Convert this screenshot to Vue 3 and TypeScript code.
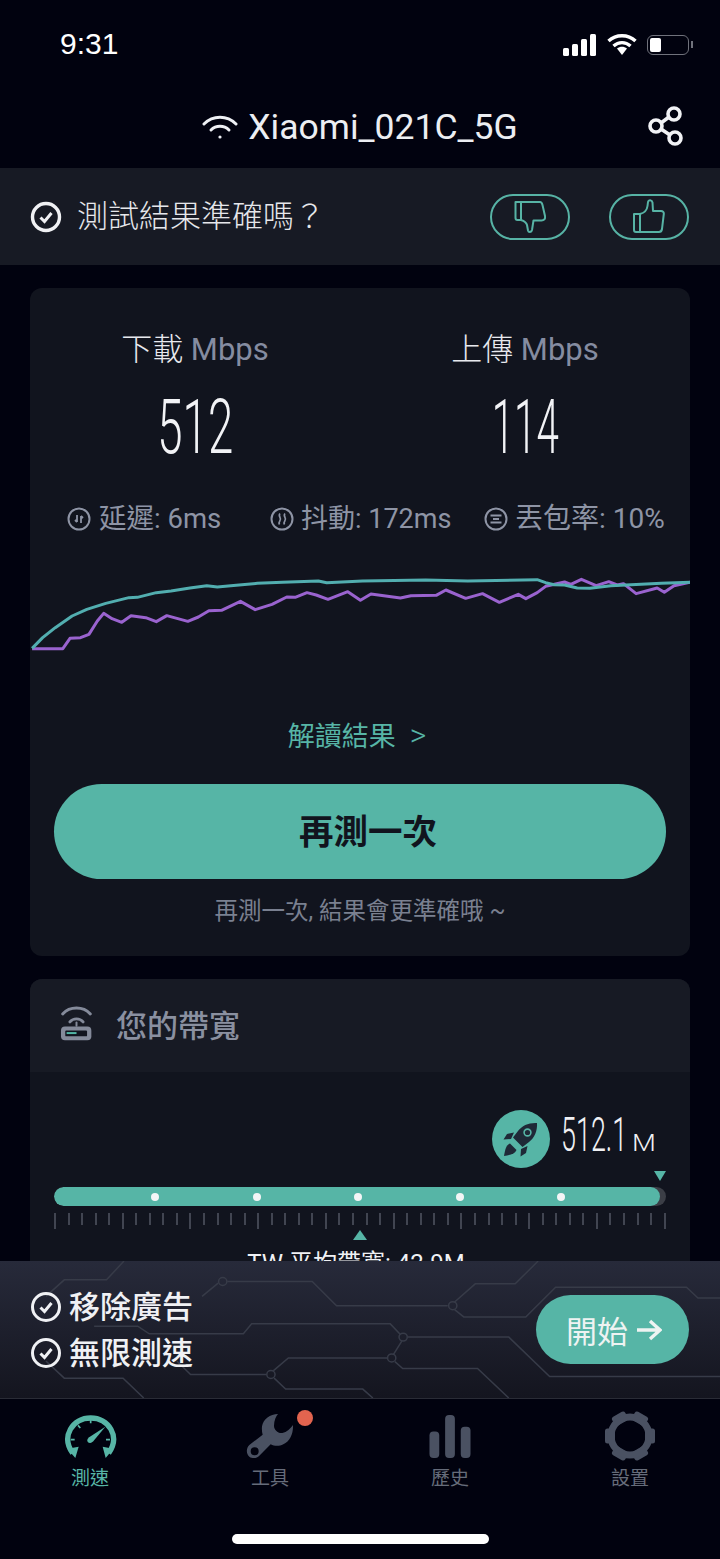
<script setup lang="ts">
const teal: [number, number][] = [[5,472],[30,440],[60,410],[100,375],[135,355],[180,337],[235,320],[255,319],[300,305],[335,300],[380,291],[420,284],[445,288],[490,283],[540,277],[600,274],[685,270],[705,275],[790,270],[940,267],[1040,270],[1205,266],[1225,275],[1245,281],[1270,282],[1300,291],[1330,292],[1380,284],[1500,277],[1568,274]]
const purple: [number, number][] = [[5,473],[78,473],[95,442],[120,440],[140,430],[160,390],[175,367],[195,383],[218,394],[240,374],[275,380],[300,392],[325,374],[375,391],[400,378],[425,359],[455,358],[500,331],[535,356],[575,340],[610,318],[630,319],[658,305],[680,312],[708,325],[755,302],[785,328],[810,309],[880,321],[905,314],[965,313],[988,297],[1035,322],[1075,308],[1115,334],[1160,310],[1178,323],[1205,305],[1225,286],[1270,273],[1285,280],[1310,265],[1345,284],[1375,272],[1395,282],[1410,278],[1440,308],[1490,291],[1507,304],[1530,284],[1568,274]]
const toPoints = (p: [number, number][]) => p.map(([x, y]) => `${x},${y}`).join(' ')
const tealPoints = toPoints(teal)
const purplePoints = toPoints(purple)
const ticks = Array.from({ length: 46 }, (_, i) => i)
const dots = [1, 2, 3, 4, 5]
const tabs = [
  { key: 'speed', label: '測速', active: true },
  { key: 'tools', label: '工具', active: false },
  { key: 'history', label: '歷史', active: false },
  { key: 'settings', label: '設置', active: false },
]
const gearTeeth = [30, 90, 150, 210, 270, 330]
</script>

<template>
  <div class="phone">
    <div class="status">
      <span class="time">9:31</span>
      <div class="status-icons">
        <svg width="34" height="22" viewBox="0 0 34 22"><rect x="0" y="14" width="6" height="8" rx="1.5" fill="#fff"/><rect x="9" y="10" width="6" height="12" rx="1.5" fill="#fff"/><rect x="18" y="5" width="6" height="17" rx="1.5" fill="#fff"/><rect x="27" y="0" width="6" height="22" rx="1.5" fill="#fff"/></svg>
        <svg width="30" height="23" viewBox="0 0 30 23"><path d="M1.5 8C9 1 21 1 28.5 8" fill="none" stroke="#fff" stroke-width="3.4"/><path d="M6.5 13C11.5 8.500 18.500 8.500 23.500 13" fill="none" stroke="#fff" stroke-width="3.4"/><path d="M10 15.500C13 13 17 13 20 15.500L15 22Z" fill="#fff"/></svg>
        <div class="battery"><i></i></div>
      </div>
    </div>

    <header class="head">
      <svg class="head-wifi" width="36" height="26" viewBox="0 0 36 26" fill="none" stroke="#eef0f4" stroke-width="3" stroke-linecap="round"><path d="M2 10C11 1 25 1 34 10"/><path d="M9 16C14 11 22 11 27 16"/><circle cx="18" cy="23" r="1.600" fill="#eef0f4" stroke="none"/></svg>
      <span class="ssid">Xiaomi_021C_5G</span>
      <svg class="share" width="36" height="40" viewBox="0 0 36 40" fill="none" stroke="#f1f2f5" stroke-width="3.600"><circle cx="26" cy="8" r="6"/><circle cx="8" cy="20" r="6"/><circle cx="27" cy="32" r="6"/><path d="M13 17 21 11M13 23 22 29"/></svg>
    </header>

    <section class="feedback">
      <div class="feedback-q">
        <svg width="32" height="32" viewBox="0 0 32 32" fill="none" stroke="#f0f1f4"><circle cx="16" cy="16" r="13.500" stroke-width="3.400"/><path d="M10.500 16.500 14.500 20.500 21.500 12" stroke-width="3" /></svg>
        <span>測試結果準確嗎？</span>
      </div>
      <div class="thumbs">
        <button class="thumb">
          <svg width="32" height="36" viewBox="0 0 32 36" fill="none" stroke="#57b3a5" stroke-width="2" stroke-linejoin="round"><path d="M1.500 3H7V21H3.500C2 21 1.500 20 1.500 19Z"/><path d="M7 3H26C27.500 3 28 4 28.500 6L31 17C31.500 20 30 21.500 27.500 21.500H19.500L18 31C17.500 33.500 14.500 33.500 14 31.500L13 26C12.500 24 10 22 7 21"/></svg>
        </button>
        <button class="thumb">
          <svg width="32" height="36" viewBox="0 0 32 36" fill="none" stroke="#57b3a5" stroke-width="2" stroke-linejoin="round"><path d="M1 15H7V33H3C1.800 33 1 32 1 31Z"/><path d="M7 15C11 14 14 11 14.500 7L15 3C15.500 0.500 19 0.800 19.500 3.500L20 12H28C30 12 31 13.500 30.800 15L29 30C28.700 32 27.500 33 26 33H7"/></svg>
        </button>
      </div>
    </section>

    <main class="content">
      <section class="card result">
        <div class="speeds">
          <div class="speed">
            <div class="speed-label">下載 <em>Mbps</em></div>
            <div class="speed-num"><span>512</span></div>
          </div>
          <div class="speed">
            <div class="speed-label">上傳 <em>Mbps</em></div>
            <div class="speed-num"><span>114</span></div>
          </div>
        </div>

        <div class="stats">
          <div class="stat">
            <svg width="24" height="24" viewBox="0 0 24 24" fill="none" stroke="#8e94a5" stroke-width="2"><circle cx="12" cy="12" r="10.500"/><path d="M10 8V15M8 13 10 15M14 16V9M14 9 16 11" stroke-width="1.800"/></svg>
            <span>延遲: 6ms</span>
          </div>
          <div class="stat">
            <svg width="24" height="24" viewBox="0 0 24 24" fill="none" stroke="#8e94a5" stroke-width="2"><circle cx="12" cy="12" r="10.500"/><path d="M10 6.500C7.500 9 12 11 10 13.500C9 15 8.500 16 9.500 17.500M15 6.500C12.500 9 17 11 15 13.500C14 15 13.500 16 14.500 17.500" stroke-width="1.700"/></svg>
            <span>抖動: 172ms</span>
          </div>
          <div class="stat">
            <svg width="24" height="24" viewBox="0 0 24 24" fill="none" stroke="#8e94a5" stroke-width="2"><circle cx="12" cy="12" r="10.500"/><path d="M6.500 8.500H17.500M9 12H15M6.500 15.500H17.500" stroke-width="1.800"/></svg>
            <span>丟包率: 10%</span>
          </div>
        </div>

        <svg class="chart" viewBox="0 210 1568 300" preserveAspectRatio="none" fill="none">
          <polyline :points="purplePoints" stroke="#9a63cf" stroke-width="3" stroke-linejoin="round" vector-effect="non-scaling-stroke"/>
          <polyline :points="tealPoints" stroke="#52aeb0" stroke-width="3" stroke-linejoin="round" vector-effect="non-scaling-stroke"/>
        </svg>

        <div class="explain">解讀結果<span>&gt;</span></div>
        <button class="again">再測一次</button>
        <div class="hint">再測一次, 結果會更準確哦 ~</div>
      </section>

      <section class="card bandwidth">
        <div class="bw-head">
          <svg width="33" height="37" viewBox="30 20 100 110">
            <g fill="none" stroke="#848a9a" stroke-width="9" stroke-linecap="round">
              <path d="M38 46C60 22 100 22 122 46"/>
              <path d="M60 70C70 58 90 58 100 70"/>
              <path d="M80 72V82" stroke-width="6"/>
            </g>
            <rect x="33" y="84" width="92" height="42" rx="12" fill="#848a9a"/>
            <rect x="46" y="96" width="66" height="18" rx="3" fill="#11141e"/>
            <rect x="50" y="101" width="30" height="6" fill="#52b5a5"/>
          </svg>
          <span>您的帶寬</span>
        </div>
        <div class="bw-body">
          <div class="bw-value">
            <div class="rocket">
              <svg width="40" height="40" viewBox="0 0 40 40"><g fill="#1f2937"><path d="M36 4C28 3.500 21 6.500 17 12L12 18.500L21.500 28L28 23C33.500 19 36.500 12 36 4Z"/><path d="M13 13.500 6 15 2.500 20.500 10 20ZM26.500 27 25 34 19.500 37.500 20 30Z"/><path d="M9 24.500C5 26 4 31 3 37C9 36 14 35 15.500 31Z"/></g><circle cx="26.500" cy="13.500" r="3.400" fill="none" stroke="#56b5a6" stroke-width="1.600"/></svg>
            </div>
            <div class="bw-num"><span>512.1</span><small>M</small></div>
          </div>
          <div class="marker-row"><i class="tri-down"></i></div>
          <div class="bar">
            <div class="bar-fill">
              <i v-for="d in dots" :key="d" class="dot"></i>
            </div>
          </div>
          <div class="ticks">
            <i v-for="t in ticks" :key="t" :class="{ major: t % 5 === 0 }"></i>
          </div>
          <i class="tri-up"></i>
          <div class="avg">TW 平均帶寬: 42.9M</div>
        </div>
      </section>
    </main>

    <section class="promo">
      <svg class="circuit" viewBox="0 18 1568 414" preserveAspectRatio="none" fill="none" stroke="#373b48" stroke-width="1.500">
        <path d="M270 18 232 75H140L100 125" vector-effect="non-scaling-stroke"/>
        <path d="M495 80H680L733 153H975" vector-effect="non-scaling-stroke"/>
        <path d="M475 85 440 125" vector-effect="non-scaling-stroke"/>
        <ellipse cx="485" cy="80" rx="9" ry="12" vector-effect="non-scaling-stroke"/>
        <ellipse cx="986" cy="153" rx="9" ry="12" vector-effect="non-scaling-stroke"/>
        <path d="M990 142 1035 87H1122L1172 18" vector-effect="non-scaling-stroke"/>
        <path d="M990 165 1010 187H1145L1210 97H1495L1520 130H1568" vector-effect="non-scaling-stroke"/>
        <path d="M205 215H300L325 238H530L548 208H850L872 240" vector-effect="non-scaling-stroke"/>
        <ellipse cx="878" cy="248" rx="9" ry="12" vector-effect="non-scaling-stroke"/>
        <path d="M888 248H1108L1197 367H1568" vector-effect="non-scaling-stroke"/>
        <path d="M875 260 857 300" vector-effect="non-scaling-stroke"/>
        <ellipse cx="853" cy="311" rx="9" ry="12" vector-effect="non-scaling-stroke"/>
        <path d="M843 311H628L595 350" vector-effect="non-scaling-stroke"/>
        <ellipse cx="590" cy="361" rx="9" ry="12" vector-effect="non-scaling-stroke"/>
        <path d="M580 361H415L385 320" vector-effect="non-scaling-stroke"/>
        <path d="M597 372 622 405H790L812 432" vector-effect="non-scaling-stroke"/>
        <path d="M860 322 877 343H1040L1108 432" vector-effect="non-scaling-stroke"/>
        <path d="M100 320 140 372H268L313 432" vector-effect="non-scaling-stroke"/>
      </svg>
      <div class="perks">
        <div class="perk">
          <svg width="32" height="32" viewBox="0 0 32 32" fill="none" stroke="#f0f1f4"><circle cx="16" cy="16" r="13.500" stroke-width="3"/><path d="M10.500 16.500 14.500 20.500 21.500 12" stroke-width="3"/></svg>
          <span>移除廣告</span>
        </div>
        <div class="perk">
          <svg width="32" height="32" viewBox="0 0 32 32" fill="none" stroke="#f0f1f4"><circle cx="16" cy="16" r="13.500" stroke-width="3"/><path d="M10.500 16.500 14.500 20.500 21.500 12" stroke-width="3"/></svg>
          <span>無限測速</span>
        </div>
      </div>
      <button class="start">
        <span>開始</span>
        <svg width="26" height="24" viewBox="0 0 26 24" fill="none" stroke="#eef3f2" stroke-width="3.400"><path d="M1 12H24M14 3 24 12 14 21"/></svg>
      </button>
    </section>

    <nav class="tabs">
      <div v-for="tab in tabs" :key="tab.key" class="tab" :class="{ active: tab.active }">
        <div class="tab-icon">
          <svg v-if="tab.key === 'speed'" width="60" height="56" viewBox="0 0 180 168" fill="none">
            <path d="M38 136C2 85 38 30 92 30C146 30 182 85 146 136" stroke="#57b5a6" stroke-width="16"/>
            <path d="M22 122 56 116 46 150ZM160 122 128 116 137 150Z" fill="#57b5a6"/>
            <path d="M92 36V46M54 52 61 60M32 95H44M150 95H138" stroke="#57b5a6" stroke-width="5"/>
            <path d="M136 56 98 102 84 90Z" fill="#57b5a6"/>
            <circle cx="90" cy="97" r="8" fill="#57b5a6"/>
          </svg>
          <svg v-else-if="tab.key === 'tools'" width="48" height="46" viewBox="36 22 144 138">
            <path fill="#4a5162" fill-rule="evenodd" d="M132 25C108 26 88 40 84 62C83 72 84 80 86 87L46 118C36 128 36 145 46 153C56 160 68 158 76 150L110 116C122 122 136 122 148 116C168 106 178 85 177 58C170 68 158 80 145 82C132 84 120 72 120 60C120 44 126 32 132 25ZM50 137A12 12 0 1 0 74 137A12 12 0 1 0 50 137Z"/>
          </svg>
          <svg v-else-if="tab.key === 'history'" width="42" height="43" viewBox="0 0 42 44" fill="#4a5162">
            <rect x="0" y="17" width="10" height="27" rx="4"/>
            <rect x="16" y="0" width="10" height="44" rx="4"/>
            <rect x="32" y="12" width="10" height="32" rx="4"/>
          </svg>
          <svg v-else width="50" height="50" viewBox="0 0 50 50">
            <g fill="#4a5162">
              <rect v-for="a in gearTeeth" :key="a" x="17.500" y="0" width="15" height="10" rx="2.500" :transform="`rotate(${a} 25 25)`"/>
            </g>
            <circle cx="25" cy="25" r="19" fill="none" stroke="#4a5162" stroke-width="7"/>
          </svg>
          <i v-if="tab.key === 'tools'" class="badge"></i>
        </div>
        <span class="tab-label">{{ tab.label }}</span>
      </div>
      <div class="home-bar"></div>
    </nav>
  </div>
</template>

<style>
html, body { margin: 0; background: #01020f; }
</style>

<style scoped>
.phone {
  width: 720px; height: 1559px; overflow: hidden; display: flex; flex-direction: column;
  background: #01020f; color: #f0f1f4;
  font-family: Roboto, "Noto Sans CJK TC", sans-serif;
}
.status { height: 88px; flex: none; display: flex; justify-content: space-between; align-items: flex-start; padding: 29px 27px 0 60px; box-sizing: border-box; }
.time { font-family: "Liberation Sans", sans-serif; font-size: 30px; line-height: 30px; color: #fff; }
.status-icons { display: flex; align-items: center; gap: 10px; margin-top: 4px; }
.battery { width: 42px; height: 20px; border: 1.500px solid #70727c; border-radius: 6px; padding: 2px; box-sizing: border-box; position: relative; margin-right: 4px; }
.battery i { display: block; width: 11px; height: 100%; background: #fff; border-radius: 2px; }
.battery::after { content: ""; position: absolute; right: -5px; top: 5px; width: 2px; height: 7px; background: #70727c; }
.head { height: 80px; flex: none; display: flex; align-items: center; justify-content: center; position: relative; padding-bottom: 2px; box-sizing: border-box; }
.head-wifi { margin-right: 10px; }
.ssid { font-size: 35.500px; color: #eceef2; }
.share { position: absolute; right: 36px; top: 18px; }
.feedback { height: 97px; flex: none; background: #171a24; display: flex; align-items: center; justify-content: space-between; padding: 0 31px 0 30px; box-sizing: border-box; }
.feedback-q { display: flex; align-items: center; gap: 15px; font-weight: 300; color: #e6e7eb; }
.feedback-q span { font-size: 31px; line-height: 40px; }
.thumbs { display: flex; gap: 39px; }
.thumb { width: 80px; height: 46px; border: 2px solid #57b3a5; border-radius: 23px; background: transparent; display: flex; align-items: center; justify-content: center; padding: 0; }
.content { flex: 1; min-height: 0; overflow: hidden; padding: 23px 30px 0; display: flex; flex-direction: column; gap: 23px; }
.card { flex: none; background: #11141e; border-radius: 12px; overflow: hidden; }
.result { height: 668px; display: flex; flex-direction: column; }
.speeds { display: grid; grid-template-columns: 1fr 1fr; padding-top: 42px; }
.speed { display: flex; flex-direction: column; align-items: center; }
.speed-label { font-size: 31px; line-height: 40px; color: #e8e9ee; font-weight: 300; white-space: pre; }
.speed-label em { font-style: normal; color: #858ca1; font-weight: 400; }
.speed-num { height: 76px; margin-top: 19px; display: flex; align-items: center; justify-content: center; font-size: 76px; line-height: 76px; font-weight: 300; color: #f2f3f6; }
.speed:first-child .speed-num span { display: inline-block; transform: scaleX(0.6); }
.speed:last-child .speed-num span { display: inline-block; transform: scaleX(0.53); }
.stats { display: grid; grid-template-columns: 203px 214px auto; padding: 0 0 0 37px; margin-top: 37px; color: #8e94a5; font-size: 27.500px; line-height: 34px; }
.stat { display: flex; align-items: center; gap: 8px; white-space: nowrap; }
.stat:nth-child(2) { font-size: 27px; gap: 7px; }
.stat:nth-child(3) { font-size: 28px; gap: 7px; }
.chart { display: block; width: 660px; height: 100px; margin-top: 25px; }
.explain { margin-top: 56px; text-align: center; font-size: 27px; line-height: 36px; color: #57b5a6; padding-right: 6px; }
.explain span { margin-left: 14px; font-size: 32px; font-weight: 300; }
.again { margin: 29px 24px 0; height: 95px; border: none; border-radius: 48px; background: #56b5a6; font-family: inherit; font-size: 34.500px; font-weight: 700; color: #11141e; flex: none; padding: 0 0 6px 16px; }
.hint { margin-top: 17px; text-align: center; font-size: 23.500px; line-height: 30px; color: #7a8090; }
.bandwidth { flex: none; }
.bw-head { height: 93px; background: #171a24; display: flex; align-items: center; gap: 23px; padding: 0 0 5px 30px; box-sizing: border-box; color: #8a90a0; font-size: 31px; font-weight: 500; }
.bw-body { padding: 38px 24px 30px; position: relative; }
.bw-value { display: flex; justify-content: flex-end; align-items: center; height: 58px; gap: 11px; padding-right: 8px; }
.rocket { width: 58px; height: 58px; border-radius: 50%; background: #56b5a6; display: flex; align-items: center; justify-content: center; }
.bw-num { color: #f0f1f4; font-size: 49px; line-height: 58px; font-weight: 300; width: 97px; white-space: nowrap; display: flex; align-items: baseline; }
.bw-num span { display: inline-block; transform: scaleX(0.55); transform-origin: left center; width: 71px; }
.bw-num small { font-size: 24px; font-weight: 300; display: inline-block; transform: scaleX(1.15); transform-origin: left center; }
.marker-row { height: 19px; display: flex; justify-content: flex-end; align-items: flex-start; padding-top: 3px; box-sizing: border-box; }
.tri-down { width: 0; height: 0; border-left: 6px solid transparent; border-right: 6px solid transparent; border-top: 10px solid #56b5a6; }
.bar { height: 19px; background: #3b3e46; border-radius: 10px; overflow: hidden; }
.bar-fill { width: 606px; height: 100%; background: #56b5a6; border-radius: 10px; display: flex; justify-content: flex-start; align-items: center; padding-left: 97px; box-sizing: border-box; gap: 93.500px; }
.dot { width: 8px; height: 8px; border-radius: 50%; background: #f4f5f6; flex: none; }
.ticks { display: flex; justify-content: space-between; align-items: flex-start; margin-top: 7px; height: 16px; }
.ticks i { width: 2px; height: 12px; background: #414551; }
.ticks i.major { height: 16px; }
.tri-up { display: block; width: 0; height: 0; margin: 1px auto 0; border-left: 7px solid transparent; border-right: 7px solid transparent; border-bottom: 10px solid #56b5a6; }
.avg { text-align: center; font-size: 24px; line-height: 30px; margin-top: 8px; padding-right: 8px; color: #f0f1f4; }
.promo { height: 138px; flex: none; position: relative; box-sizing: border-box; padding: 0 31px 0 30px; display: flex; align-items: center; justify-content: space-between; background: linear-gradient(#272a3a, #14151f); border-bottom: 1px solid #2a2c36; }
.circuit { position: absolute; inset: 0; width: 100%; height: 100%; }
.perks { position: relative; display: flex; flex-direction: column; gap: 7px; padding-top: 1px; }
.perk { display: flex; align-items: center; gap: 7px; font-size: 31px; font-weight: 500; line-height: 39px; color: #f0f1f4; }
.start { position: relative; width: 153px; height: 69px; border: none; border-radius: 35px; background: #56b5a6; color: #eef3f2; font-family: inherit; font-size: 31px; display: flex; align-items: center; justify-content: center; gap: 8px; padding: 0 0 0 3px; }
.tabs { height: 160px; flex: none; display: grid; grid-template-columns: repeat(4, 180px); position: relative; align-items: start; }
.tab { display: flex; flex-direction: column; align-items: center; color: #666c7a; }
.tab.active { color: #57b5a6; }
.tab-icon { height: 50px; margin-top: 12px; display: flex; align-items: center; justify-content: center; position: relative; }
.tab-label { font-size: 19px; line-height: 24px; margin-top: 6px; }
.badge { position: absolute; right: -19px; top: -1px; width: 16px; height: 16px; border-radius: 50%; background: #e2644f; }
.home-bar { position: absolute; left: 232px; bottom: 15px; width: 257px; height: 10px; border-radius: 5px; background: #fff; }
</style>
